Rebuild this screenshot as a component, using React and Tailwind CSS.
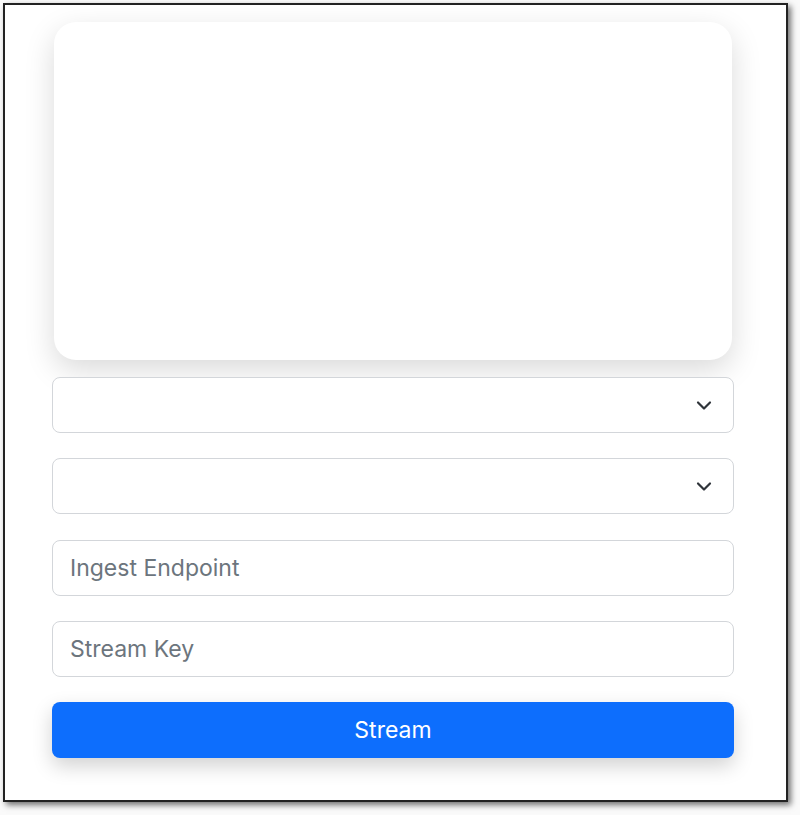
export default function App() {
  const Chevron = () => (
    <svg width="16" height="16" viewBox="0 0 16 16" fill="none" stroke="#2f343a" strokeWidth="2.2" strokeLinecap="round" strokeLinejoin="round">
      <path d="M2 5.5l6 6 6-6" />
    </svg>
  );
  return (
    <div className="w-[800px] h-[815px] bg-[#fafafa] pl-[3px] pt-[3px]" style={{ fontFamily: 'Inter, "Liberation Sans", sans-serif' }}>
      <div className="w-[785px] h-[799px] border-2 border-[#222] bg-white shadow-[3px_3px_6px_rgba(0,0,0,0.55)] pl-[47px] pt-[17px]">
        <div className="w-[682px] flex flex-col">
          <div className="mx-[2px] h-[338px] rounded-[22px] bg-white shadow-[0_10px_30px_rgba(0,0,0,0.15)]" />
          <div className="mt-[17px] h-[56px] rounded-[8px] border border-[#d3d6da] bg-white flex items-center justify-end pr-[21px]">
            <Chevron />
          </div>
          <div className="mt-[25px] h-[56px] rounded-[8px] border border-[#d3d6da] bg-white flex items-center justify-end pr-[21px]">
            <Chevron />
          </div>
          <div className="mt-[26px] h-[56px] rounded-[8px] border border-[#d3d6da] bg-white flex items-center pl-[17px] pt-[1px] text-[23px] text-[#6c757d]">
            Ingest Endpoint
          </div>
          <div className="mt-[25px] h-[56px] rounded-[8px] border border-[#d3d6da] bg-white flex items-center pl-[17px] pt-[1px] text-[23px] text-[#6c757d]">
            Stream Key
          </div>
          <div className="mt-[25px] h-[56px] rounded-[8px] bg-[#0d6efd] flex items-center justify-center pt-[1px] text-[23px] text-white shadow-[0_8px_20px_rgba(0,0,0,0.18)]">
            Stream
          </div>
        </div>
      </div>
    </div>
  );
}
